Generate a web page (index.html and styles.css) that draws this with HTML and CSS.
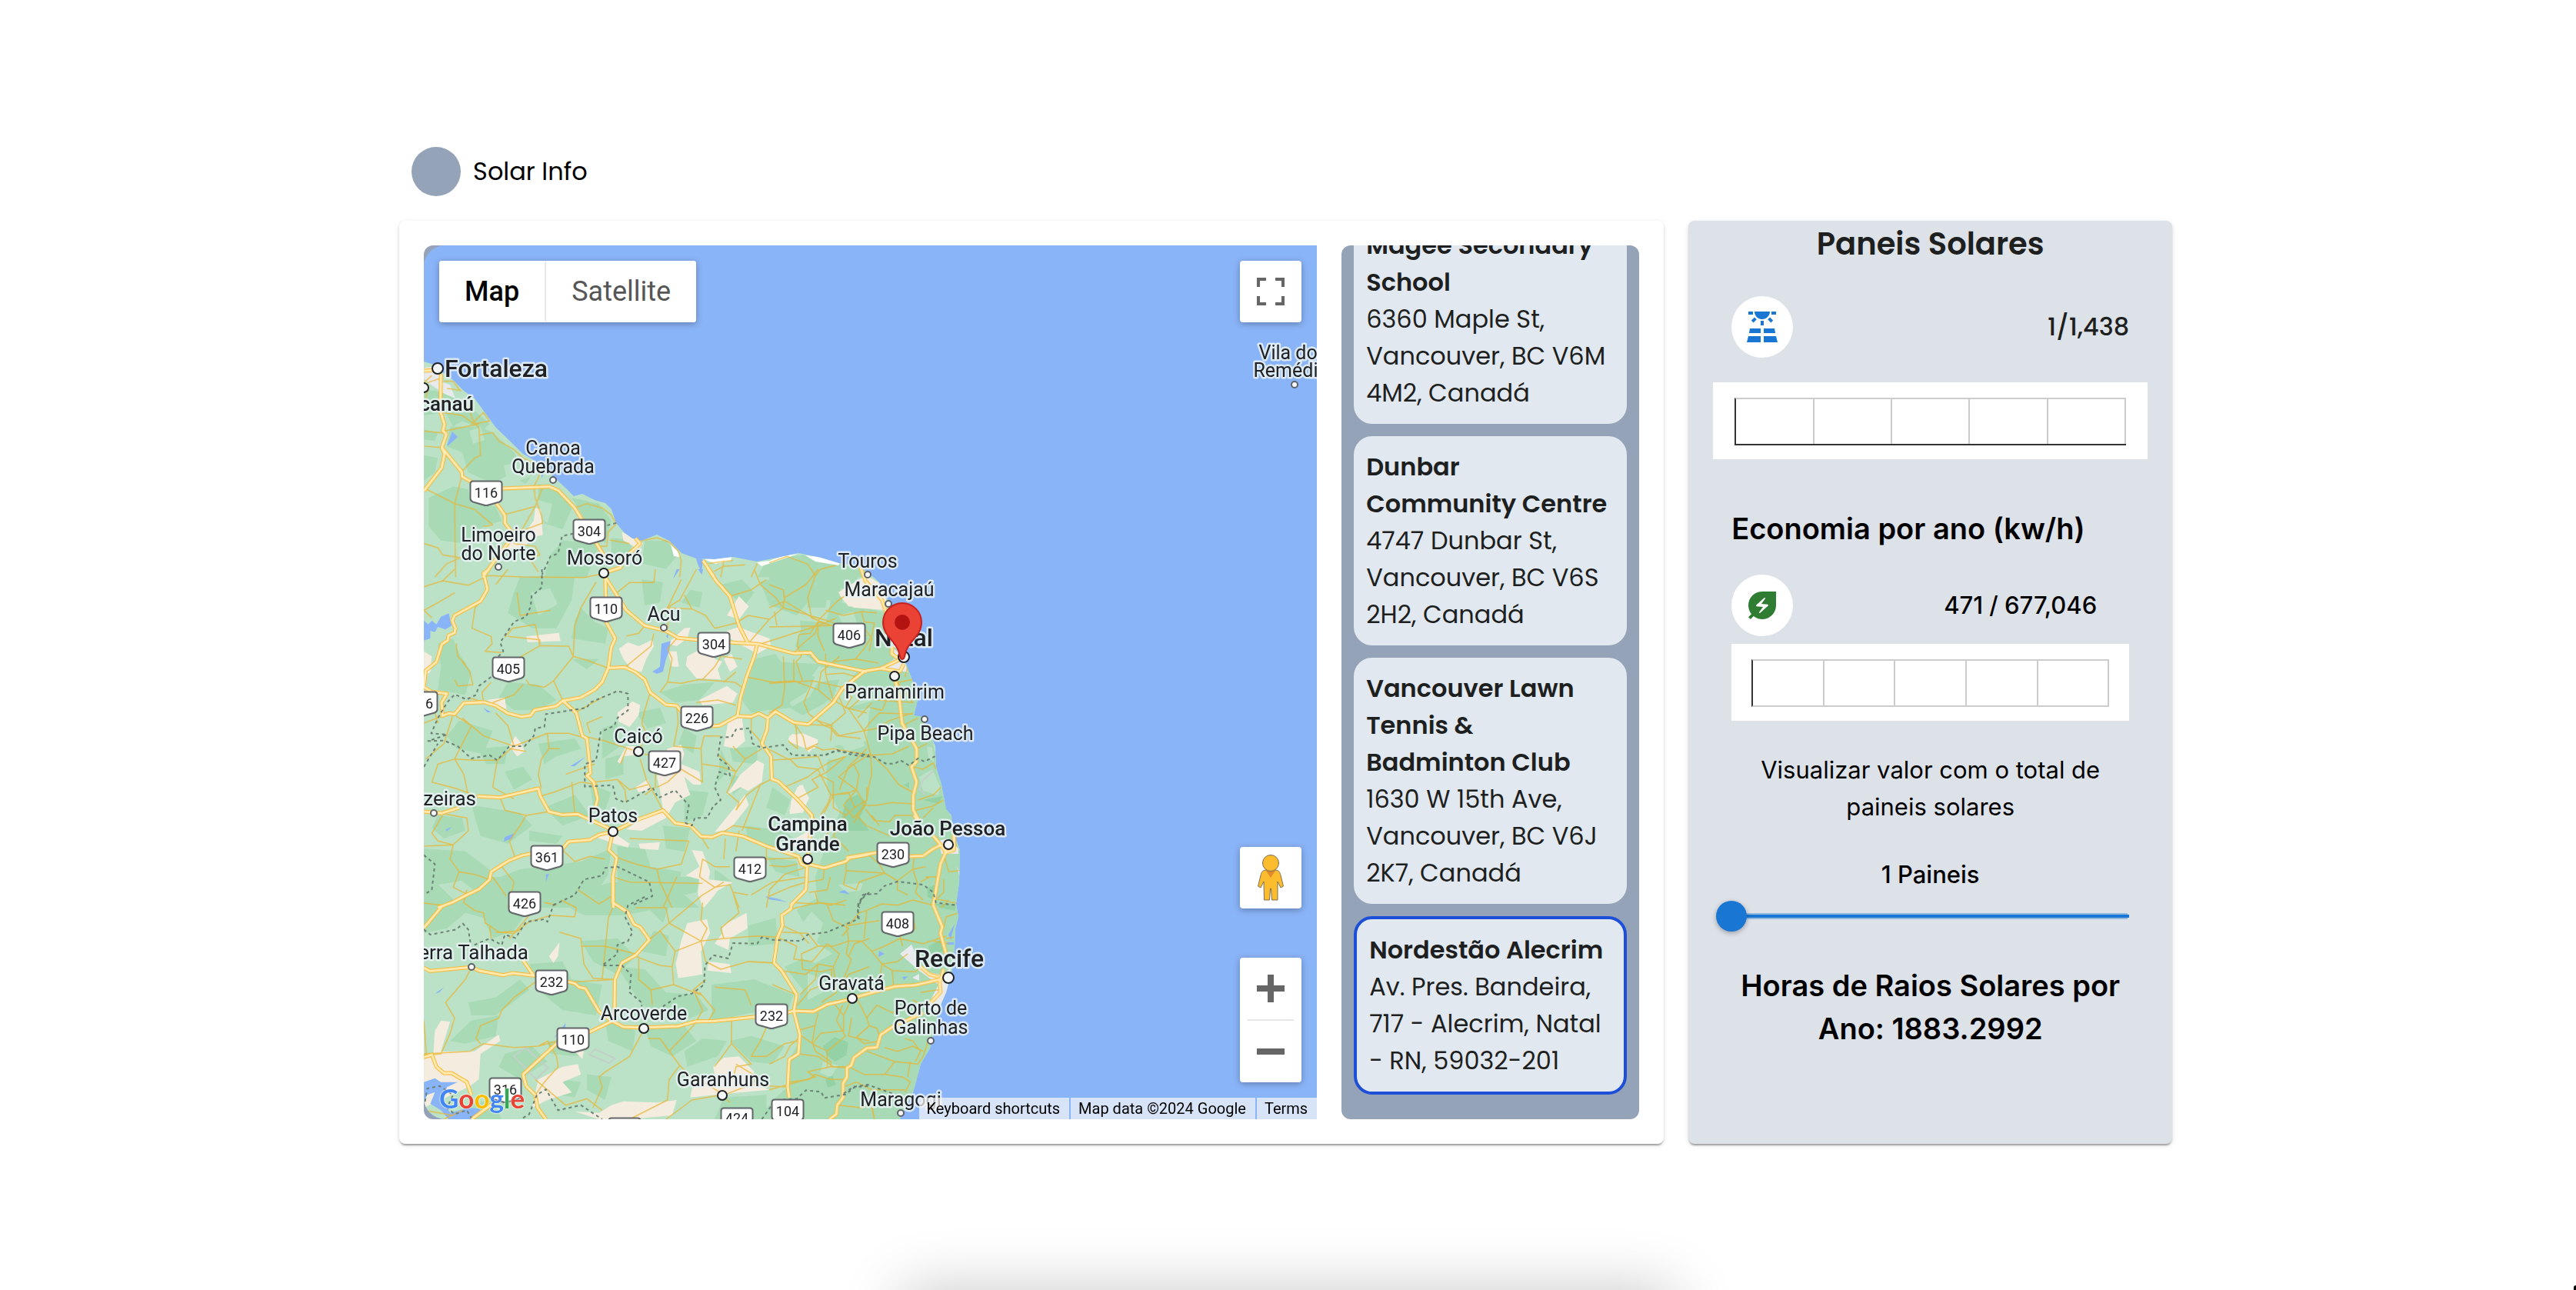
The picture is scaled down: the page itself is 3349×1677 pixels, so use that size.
FILE: index.html
```html
<!DOCTYPE html>
<html lang="pt-BR">
<head>
<meta charset="utf-8">
<meta name="viewport" content="width=device-width, initial-scale=1">
<title>Solar Info</title>
<link rel="stylesheet" href="styles.css">
</head>
<body>
<div class="page">
  <header class="brand">
    <span class="brand-mark"></span>
    <span class="brand-name">Solar Info</span>
  </header>

  <main class="dashboard">
    <section class="card explorer">
      <div class="map-frame">
        <div class="map">
          <svg class="map-canvas" viewBox="551 319 1161 1136" preserveAspectRatio="xMinYMin slice" role="img" aria-label="Mapa do Nordeste do Brasil">
            <defs>
              <path id="coast" d="M551 470L561 473 589 494 603 508 617 518 644 555 680 590 692 597 704 605 723 623 735 634 746 645 757 642 773 650 787 654 795 662 801 680 812 693 822 700 834 703 854 695 870 703 886 719 905 726 929 727 953 724 984 730 1020 723 1038 719 1067 725 1090 732 1113 735 1127 743 1143 757 1153 777 1160 800 1170 830 1177 860 1187 887 1193 910 1188 930 1200 932 1204 947 1213 963 1216 970 1217 997 1224 1020 1230 1052 1237 1060 1238 1080 1245 1097 1248 1105 1247 1147 1243 1175 1246 1192 1242 1207 1241 1233 1238 1260 1230 1290 1220 1313 1212 1350 1209 1363 1197 1383 1187 1420 1170 1455H551Z"/>
              <clipPath id="land-clip"><use href="#coast"/></clipPath>
              <g id="shield">
                <path d="M-17-15.500H17Q20.500-15.500 20.500-12V7Q20.500 10 17 11.500L3 15.500Q0 16.500-3 15.500L-17 11.500Q-20.500 10-20.500 7V-12Q-20.500-15.500-17-15.500Z"/>
              </g>
              <g id="highways">
                <g transform="matrix(.3954 0 0 .37 510 170)">
                  <path d="M104 843L149 840M160 855L158 985 172 1032 166 1053 178 1066 163 1113 172 1135 162 1185 104 1265M163 1113L228 1198 230 1215 270 1240M340 1305L370 1350V1378L400 1420 340 1505 298 1568M360 1257L515 1250 545 1263 600 1325 660 1430 700 1500M695 1553L750 1535 760 1505 815 1450 800 1432M1022 1510L1058 1568"/>
                </g>
                <g transform="matrix(.3954 0 0 .3333 510 740)">
                  <path d="M318 0L300 15 313 78 290 125 205 180 197 200 208 230 205 248 185 258 182 278 163 292 145 362 110 395 104 460 130 478 180 485 162 520 165 572 185 562 205 565 235 522 300 518 340 532 380 562 425 575 455 570 467 550 540 533 560 513 620 500 665 470 690 440 710 385 720 305 733 270 705 210 700 20"/>
                  <path d="M700 30L770 160 830 220 900 240 940 268 1005 275M1108 285L1205 292 1320 328 1375 325 1400 360 1560 400M710 385L765 382 800 402 830 430 848 480 900 528 935 532 955 560M1050 612L1075 610 1135 572 1145 500 1165 420 1190 340 1200 292M1040 0L1065 45 1110 105 1140 220 1170 290"/>
                  <path d="M1135 572L1180 575 1205 562 1235 580 1260 555 1320 598 1368 605 1450 520 1480 465 1550 400M1235 580L1232 625 1215 680 1245 730 1248 818 1270 828 1330 895 1380 960 1366 1131M560 513L605 560 625 650 640 660 652 795 640 805 662 830 675 895 665 940"/>
                  <path d="M104 945L160 952 220 930M280 885L355 890 480 855 487 885 515 945 560 958 610 955 720 1015M726 1023L680 1035 650 1055 580 1062 560 1090M455 1110L430 1115 385 1135 325 1180 320 1210 285 1248 245 1270 200 1298 150 1320M726 1023L810 975 890 940 930 990 980 1000 1015 1042 1050 1045 1085 1028 1150 1040 1230 1080 1335 1120 1345 1150 1366 1160M722 1040L712 1095 738 1125 725 1200 727 1320M1366 1150L1420 1165 1490 1140 1505 1125 1568 1112M1364 1160L1360 1250 1310 1310"/>
                </g>
                <g transform="matrix(.3954 0 0 .3333 510 1140)">
                  <path d="M165 112L104 198M727 0L725 100 775 138 795 185 815 195 845 245 800 305 755 335 732 400 730 555M104 355L125 367 260 352 285 365 365 383 395 375 465 385 430 325M575 408L600 415 615 430 635 435 680 525 720 560 760 585 826 587 940 582 1000 563 1060 562 1195 545M1298 530L1320 522 1385 525 1430 497 1512 475M727 560L645 607M540 650L430 770 440 815 470 850 478 900 505 945M104 703L130 693 145 740 170 765 195 765 245 800 260 850M330 885L260 945M1315 100L1310 125 1280 150 1283 190 1267 235 1255 335 1280 365 1330 460 1320 522 1340 615 1335 690 1305 712 1300 820 1305 860"/>
                </g>
                <g transform="matrix(.3333 0 0 .3333 1000 680)">
                  <path d="M365 578L435 567 525 525M435 567L510 578 525 550M490 600L508 690 518 780 575 880V930L555 950 575 1010 562 1060V1120L585 1160M355 170L375 225 440 300 460 360M480 480L478 510 500 525"/>
                </g>
                <g transform="matrix(.3333 0 0 .3333 1000 1060)">
                  <path d="M300 165L420 145M545 160L600 158 640 130 670 115 690 145 720 135V60M640 80L690 140 668 190 640 350 675 435 668 460 690 540M324 713L460 675 490 667 570 662 665 640M680 600L665 650 668 690 630 730M590 590L625 620 660 630M600 770L480 825 435 855 420 905 380 908 330 945 320 975 303 985V1020L288 1045V1100L265 1130 262 1165 235 1185M565 0L580 20"/>
                </g>
              </g>
            </defs>

            <rect class="sea" x="551" y="319" width="1161" height="1136"/>
            <use href="#coast" class="land"/>

            <g clip-path="url(#land-clip)">
              <g class="forest">
                <g transform="matrix(.3954 0 0 .37 510 170)">
                  <path d="M104 910L150 915 190 930 250 965 320 1030 300 1050 230 1020 200 1040 175 990 104 1000ZM190 1040L290 1040 330 1060 400 1130 420 1170 470 1190 440 1240 380 1210 330 1240 250 1200 230 1130 180 1110ZM104 1050L150 1060 140 1090 104 1085ZM104 1140L150 1150 140 1200 104 1230ZM120 1290L200 1250 250 1260 260 1310 340 1320 360 1370 300 1390 240 1450 160 1440 120 1390ZM480 1240L560 1270 590 1330 560 1400 500 1380 480 1300ZM590 1290L680 1310 720 1370 700 1450 640 1380ZM560 1440L680 1450 640 1568 500 1568 520 1490ZM720 1430L790 1440 780 1500 720 1490ZM830 1440L900 1440 940 1490 900 1540 820 1520ZM1230 1510L1350 1490 1450 1520 1568 1540V1568H1200Z"/>
                </g>
                <g transform="matrix(.3954 0 0 .3333 510 740)">
                  <path d="M420 30L600 20 590 120 540 230 460 230 380 170 400 90ZM150 290L200 270 220 330 260 400 240 490 150 470 160 380ZM620 150L660 200 710 230 700 290 590 270 600 200ZM820 40L890 50 880 130 830 140ZM980 80L1020 90 1010 150 950 130ZM1080 60L1150 40 1190 90 1160 140 1110 100ZM1210 50L1300 20 1400 60 1470 50 1480 130 1380 110 1330 180 1240 140ZM1340 200L1440 210 1540 300 1560 380 1440 340 1350 290ZM1190 350L1260 330 1300 400 1390 420 1360 480 1280 540 1180 560 1150 510ZM1400 440L1470 430 1450 500 1390 540 1370 500ZM380 440L480 450 540 510 480 550 400 550 350 500ZM590 350L680 350 640 390ZM880 480L960 450 1060 440 1010 510 930 520ZM800 560L880 540 900 600 840 620ZM220 590L330 630 300 720 210 700 180 650ZM280 700L380 690 370 760 310 760ZM370 790L430 770 460 820 400 860ZM480 680L600 660 620 700 540 730 500 760ZM690 620L740 600 750 690 690 740ZM960 620L1000 650 990 720 940 680ZM700 740L760 720 760 800 700 820ZM960 860L1040 870 1020 960 960 990ZM1110 700L1200 690 1200 760 1120 750ZM1110 800L1180 820 1120 880ZM260 920L420 950 460 1000 380 1070 290 1040ZM500 930L600 880 650 960 560 1000ZM450 1020L560 1040 540 1070 450 1060ZM150 960L230 970 240 1020 170 1050 130 1010ZM104 1090L240 1100 330 1180 310 1240 200 1320H104ZM250 1250L420 1170 620 1140 720 1090 710 1190 640 1320H250ZM740 1080L830 1090 850 1160 950 1180 940 1250 1010 1320H740ZM890 1000L980 1010 960 1100 900 1090ZM1160 1000L1290 1020 1340 1070 1280 1090 1170 1060ZM1060 1170L1120 1220 1060 1230ZM1250 850L1310 900 1290 960 1230 930ZM1430 750L1568 700V1320H1400L1390 1200 1420 1100 1480 960 1430 860ZM1230 1120L1330 1140 1340 1200 1260 1180ZM1080 700L1110 780 1070 830ZM650 840L720 870 700 940 660 920Z"/>
                </g>
                <g transform="matrix(.3954 0 0 .3333 510 1140)">
                  <path d="M104 0H560L520 90 440 140 400 210 330 240 300 160 240 140 180 200 104 220ZM560 100L620 60 720 20 840 30 850 130 760 150 620 150ZM840 0H1010L1000 60 920 80 890 180 840 120ZM860 210L910 230 900 310 820 290ZM620 250L740 240 800 310 740 380 660 330ZM450 340L560 330 590 400 690 420 670 540 560 520 480 440ZM250 490L340 470 420 400 450 440 340 540 260 540ZM190 640L260 560 350 540 340 620 240 650ZM370 690L460 660 510 720 420 790 350 740ZM510 640L630 650 610 700 520 690ZM700 560L800 600 790 680 710 640ZM830 590L960 580 1000 640 920 700 850 660ZM1020 630L1100 640 1070 700 970 740 960 680ZM640 770L720 780 700 870 640 830ZM740 350L830 360 900 450 1000 460 1040 520 960 560 820 500ZM1050 420L1190 400 1320 460 1300 520 1180 530 1050 560ZM1170 190L1260 160 1270 260 1170 270ZM1330 130L1400 80 1568 0V945H1200L1260 860 1300 820 1310 700 1350 620 1320 520 1350 440 1290 350 1400 290ZM1110 640L1180 620 1290 660 1250 730 1180 720ZM1090 860L1230 850 1230 945H1060ZM240 890L330 870 360 945H250ZM560 790L620 800 600 860 540 850Z"/>
                </g>
                <g transform="matrix(.3333 0 0 .3333 1000 680)">
                  <path d="M0 160L180 160 340 180 350 260 230 250 220 330 150 330 150 240 0 220ZM240 300L460 350 520 520 560 600 600 720 640 860 660 950 720 1200H250L300 1050 250 950 330 900 250 870 380 850 390 740 300 720 420 690 300 640 340 580 200 560 100 480 130 400 220 400ZM0 540L200 550 150 620 0 600ZM0 640L60 660 90 720 0 730ZM80 720L190 660 220 700 130 750ZM230 920L330 940 300 1060 220 980Z"/>
                </g>
                <path d="M1140 1060H1260V1455H1050V1200L1100 1120Z"/>
              </g>
              <g class="meadow">
                <path d="M1090 1150L1122 1148 1118 1158 1100 1160ZM1035 1210L1055 1185 1070 1200 1062 1225 1082 1240 1060 1252 1040 1245ZM1050 1265L1062 1270 1070 1290 1050 1300ZM1195 1010L1212 1000 1222 1022 1220 1034 1200 1028ZM1085 955L1120 950 1124 970 1100 978ZM1205 970L1212 972 1214 990 1207 985ZM1106 925L1132 920 1125 940ZM610 560L625 555 630 572 615 577ZM655 605L680 600 690 620 660 630ZM700 650L718 655 712 680 698 670Z"/>
                <path d="M690 770L715 765 725 785 700 800ZM570 1150L600 1145 620 1160 590 1170ZM700 1185L740 1180 760 1190 720 1205ZM1090 800L1110 795 1115 815 1100 820ZM1070 1380L1090 1385 1080 1400 1066 1395Z"/>
              </g>
              <g class="woods">
                <path d="M1100 1040L1115 1033 1127 1044 1118 1062 1130 1080H1090ZM1070 1360L1085 1348 1103 1355 1100 1372 1086 1380 1075 1372ZM1073 1403L1082 1398 1087 1410 1076 1414ZM1205 1155L1215 1150V1170L1206 1166ZM1215 1175H1242V1184L1222 1180ZM1207 1230L1222 1222 1230 1236 1210 1240ZM1200 1040L1226 1035 1220 1045ZM1175 1020L1182 1017V1025Z"/>
              </g>
              <g class="sand">
                <g transform="matrix(.3954 0 0 .37 510 170)">
                  <path d="M470 1325L488 1330 495 1420 470 1425 430 1465 380 1470 370 1440 430 1420 465 1370ZM755 1410L800 1430 825 1450 810 1470 760 1440Z"/>
                </g>
                <g transform="matrix(.3954 0 0 .3333 510 740)">
                  <path d="M440 262L548 248 553 280 445 285ZM745 310L775 285 810 300 855 275 860 300 835 350 820 400 790 395 760 350ZM905 290L960 230 980 228 970 270 935 300ZM905 320L935 320 942 380 920 380ZM1000 320L1030 270 1050 300 1060 350 1085 360 1070 390 1080 430 1000 425 965 375 970 340ZM1100 240L1140 225 1170 240 1240 270 1245 300 1200 330 1110 270ZM1090 350L1115 330 1135 380 1110 400ZM1100 180L1140 105 1172 145 1140 195ZM1010 510L1100 455 1135 485 1120 520 1020 530ZM1105 590L1150 580 1160 670 1130 700 1090 690ZM1305 650L1350 640 1400 665 1390 700 1350 695 1310 675ZM740 560L790 515 815 530 810 570 780 615 745 595ZM310 510L370 500 375 545ZM385 690L405 650 425 680 435 710 410 730ZM104 320L130 340 125 400 104 420ZM740 750L770 690 820 690 830 720 760 730 750 760ZM905 700L950 685 960 720 950 760 1010 790 1015 840 990 840 960 810 970 850 980 880 930 910 900 970 820 1020 770 1015 830 960 890 940 880 860 870 810ZM800 850L840 820 850 860 810 870ZM1145 800L1200 745 1222 760 1215 830 1170 865 1145 850 1100 880ZM1060 1025L1160 880 1172 920 1110 1015ZM1305 945L1340 840 1370 890 1350 950ZM660 1040L730 1030 780 1070 775 1085 730 1070ZM810 1070L880 1065 875 1095 815 1090ZM985 1095L1020 1100 1045 1180 1040 1210 1120 1220 1060 1260 1020 1320 1005 1260 1010 1210 965 1195 1010 1160ZM1310 1060L1370 1020 1380 1100 1340 1100ZM1470 100L1568 80V150L1500 145Z"/>
                </g>
                <g transform="matrix(.3954 0 0 .3333 510 1140)">
                  <path d="M1010 10L1090 20 1060 70 1025 120 1005 70ZM970 180L1035 165 1045 220 1015 290 1020 380 940 395 932 340 950 250ZM1085 190L1165 140 1168 200 1110 240 1105 285 1060 260 1085 220ZM1040 330L1110 340 1115 375 1035 365ZM550 255L545 310 530 335 515 310ZM140 600L160 560 190 565 160 680 270 680 350 615 355 640 290 690 285 790 250 820 104 900V710L135 690ZM480 790L560 740 610 730 620 770 560 800 590 840 510 870 460 900ZM600 915L680 920 720 890 760 875 870 880 935 870 920 930 780 945H680ZM1055 740L1090 705 1140 700 1190 760 1180 800 1240 830 1060 850 980 860 990 800 1060 770ZM600 680L630 680 625 710Z"/>
                </g>
                <g transform="matrix(.3333 0 0 .3333 1000 680)">
                  <path d="M270 270L350 220 380 205 430 235 455 290 460 340 330 330 290 300ZM75 840L90 822 180 840 190 855 155 895 130 865 80 855ZM110 1030L130 1020 155 1075 120 1130 80 1135 85 1085Z"/>
                </g>
              </g>
              <g class="urban">
                <path d="M552 478L575 475 572 496 585 500 592 518 578 512 560 500 551 492ZM1150 865L1170 852 1177 862 1180 874 1170 872 1160 874ZM1160 842L1168 848 1166 858ZM1220 1093L1232 1090 1246 1103V1110H1224ZM1243 1125L1247 1133 1248 1140ZM1170 1240L1185 1228 1200 1262 1225 1268 1236 1258 1234 1285 1222 1315 1205 1310 1220 1280 1195 1262ZM1186 1271L1195 1266 1195 1275Z"/>
              </g>
              <g class="lake">
                <g transform="matrix(.3954 0 0 .3333 510 740)">
                  <path d="M104 200L118 215 130 200 145 215 160 185 186 172 195 220 175 235 150 225 140 245 125 240 125 270 104 278ZM885 290L915 280 910 320 900 350 890 400 870 408 855 400 880 380ZM900 262L907 250V270ZM935 0H945L922 40ZM1005 0H1022L1018 22ZM370 1045L400 1030 395 1050 366 1062ZM505 1190L515 1188 505 1222ZM585 768L635 732 600 768ZM300 540L325 558 312 558ZM175 1015L195 1005 180 1022ZM1225 1275L1300 1298 1240 1288Z"/>
                </g>
                <g transform="matrix(.3954 0 0 .3333 510 1140)">
                  <path d="M104 800L140 785 160 800 215 800 180 820 165 870 190 920 250 900 290 905 270 945H185L160 910 125 885 140 840 115 850 104 880ZM140 455L170 430 155 450ZM530 630L570 570 568 590Z"/>
                </g>
                <path d="M581 579L588 561 595 568 583 579ZM704 622V606L706 618ZM903 717L906 730 912 745 914 728ZM1142 1244L1143 1236 1150 1240ZM1173 1270L1181 1269 1175 1274ZM1233 1215L1241 1201 1236 1222ZM1231 1225H1240V1228H1231ZM1090 1160L1098 1157 1105 1163 1097 1161ZM1000 1166L1026 1173 1010 1168Z"/>
              </g>
              <g class="surf">
                <path d="M915 727L932 725 951 724 950 729 930 733ZM984 731L1000 729 1020 722 1037 720 1020 726 990 736ZM1047 722L1067 724 1092 731 1090 735 1060 730ZM872 708L882 718 884 724 876 723Z"/>
              </g>
              <g class="park-line">
                <path d="M1214 1002L1200 1014 1195 1026 1203 1033M668 1373L683 1362 712 1388 697 1403ZM766 1371L774 1364 800 1376 792 1382Z"/>
              </g>

              <g class="minor">
                <g transform="matrix(.3954 0 0 .37 510 170)">
                  <path d="M104 885L130 860M115 885L158 870M170 880L200 880 225 915M180 905L220 912M165 990L230 1000 270 1030 320 1020 300 990 260 1030M250 960L262 1010 285 1045 290 1140 270 1150 228 1198M172 1055L285 1030M104 1055L165 1062M104 1108L163 1113M285 1070L330 1060 350 1090 400 1120 430 1150 490 1180 480 1220 465 1250 470 1290 490 1350 495 1378 440 1400 380 1405M104 1255L205 1310 208 1568M228 1215L205 1310 270 1330 330 1385 300 1390M470 1320L370 1348M495 1250L470 1320 400 1450M600 1325L640 1310 690 1325 720 1350 736 1380 710 1410 705 1460 680 1460M715 1438L780 1450M820 1440L870 1430 910 1445 940 1475 950 1510 945 1568M104 1450L150 1465 165 1490 225 1500 180 1520 140 1568M400 1450L470 1460 485 1490 450 1500 480 1550M700 1500L760 1520M1090 1510L1080 1568M1058 1548L1090 1530 1160 1525M1200 1520L1180 1568M1040 1520L1120 1510M120 895L110 940"/>
                </g>
                <g transform="matrix(.3954 0 0 .3333 510 740)">
                  <path d="M104 68L165 45 205 0M165 45L250 62 315 25 430 30 630 32 680 20M205 92L150 130 104 160M290 125L272 150 262 230 325 262 328 290 305 320 360 325M670 50L620 150 600 220 595 340 530 435 500 460 450 450 440 430M410 90L420 180M420 180L520 160M340 60L380 0M380 262L485 275 485 298M370 265L395 230 470 215 485 298 410 350M485 298L580 300 595 340 640 355 708 385M530 435L560 510M230 360L255 400 265 450 215 455 205 430M300 518L295 480 325 440M210 290L215 340 240 370M104 160L130 190"/>
                  <path d="M740 90L780 52 860 52 865 0M950 40L905 150 880 190M1000 0L945 120 910 145 905 230M905 150L985 155 1030 180 1060 230 1130 210M985 155L960 100M1130 210L1170 180 1240 195 1285 150 1260 110 1210 60 1190 0M1240 195L1170 290M1285 150L1430 200 1560 260M1285 150L1290 110 1360 60 1400 0M1110 105L1180 80 1230 40M1400 220L1390 250 1340 300 1320 328M1460 190L1400 220 1320 250 1210 292M830 220L810 250 770 260M860 250L850 300 765 382M935 270L905 310 920 350 905 440 880 480M905 440L950 445 1010 430 1125 440 1150 460M1040 300L1080 340 1060 380 1020 430M1085 340L1150 350"/>
                  <path d="M848 480L830 550 820 600 835 640 815 700M935 532L940 600 925 690 1015 700 1025 650 1080 650M1015 700L1020 830 950 780 905 830 870 850M1000 520L1070 510 1130 530M1165 420L1250 440 1320 435 1400 470 1450 520M1320 435L1320 350M1400 470L1410 400 1470 340M1180 575L1180 630 1210 670M1368 605L1440 610 1490 560 1470 500M1440 610L1470 650 1540 660M1320 598L1350 650 1360 700 1400 680M1215 700L1160 740 1130 790 1080 770 1020 760M1160 740L1120 690M1070 720L1130 790 1100 870 1140 910 1130 940M1130 940L1165 880 1210 840M1248 818L1210 840 1150 1020"/>
                  <path d="M625 650L700 670 790 705M640 660L580 640 510 640 400 690M510 640L515 700 550 700M515 700L490 740 480 800 490 855M400 690L345 745 330 850M400 690L300 650 230 580M200 565L260 610 205 740M205 740L235 800 250 885M205 740L150 760 130 830M130 830L210 855 280 885M205 740L270 745 345 745M340 560L380 610 400 690M385 700L440 710M110 740L170 680 200 565M675 840L620 830 530 870 487 885M590 830L600 955M665 760L640 770 570 800M740 820L765 860 770 910M662 830L740 820 780 860 840 840M815 740L835 820 890 940M830 720L860 730M770 700L750 760M865 780L865 850 830 880M690 575L640 600 650 640"/>
                  <path d="M104 1080L200 1075 250 1020 245 970 160 952M200 1075L190 1130 220 1180 270 1190 320 1210M165 960L130 1030 150 1060 200 1075M420 1000L385 1060 405 1130M420 1000L440 960 515 945M220 1180L200 1240 250 1270M360 1160L400 1220 380 1320M560 1095L600 1140 650 1120 700 1130M740 1125L800 1150 870 1170 950 1150 975 1060 780 1050M870 1170L880 1220 920 1320M725 1200L780 1220 1020 1225M1015 1042L1040 1090M1085 1028L1120 1000 1210 1015M1095 1050L1090 1130M1140 1020L1130 1100M1020 1130L1010 1200 1060 1240 1110 1230 1140 1320M1020 1130L1060 1160 1110 1160M1230 1080L1230 1150M1230 1130L1360 1125M1366 1160L1290 1190 1240 1250 1230 1320M1380 960L1420 1010 1450 1000 1400 1080M1450 880L1500 870 1520 930 1490 960 1450 930ZM1520 930L1560 900 1560 850M1490 960L1450 1040 1500 1100M1400 800L1450 830 1450 880 1420 950M1330 895L1400 850 1380 820 1430 790 1490 730"/>
                  <path d="M1480 465L1510 500 1490 540 1560 560M1235 700L1300 740 1400 730 1420 790M1560 700L1500 770 1470 860M104 600L165 572M130 520L150 600M250 500L300 518M430 450L400 490 330 520M600 560L690 500M330 850L400 895M355 890L370 940 440 960M1090 440L1130 400"/>
                </g>
                <g transform="matrix(.3954 0 0 .3333 510 1140)">
                  <path d="M104 102L165 110M245 50L235 100 270 130 300 140 305 180 320 190 325 240M375 75L330 0M450 150L400 220 340 215M320 190L350 215 420 210M500 100L540 110M555 90L605 120 600 155 520 150 450 175 400 220 385 240M610 50L680 105 720 75M725 120L710 160 690 400M550 215L620 240 630 340 660 395 730 400M620 270L700 270 800 300M845 245L880 210 930 290 1015 250 1090 240M880 210L910 180 900 120 800 120M910 180L1020 70 1090 20M910 180L1015 250 1030 330M935 0L890 120M930 290L920 350 880 345 800 310M920 350L925 420 850 440 810 400 810 310M850 440L855 500M925 420L1015 460 990 440 1030 400M1015 250L1035 200 1015 170 1020 100M1030 330L1080 360 1170 330 1255 335M1080 200L1090 240 1200 230 1267 235M1080 200L1140 140 1120 60 1170 70"/>
                  <path d="M470 410L400 470 360 520 350 550 290 580 275 630 290 650M260 352L240 400 175 490 205 550 190 610 160 690 104 695M104 560L112 690M104 690L255 680 300 650 400 665 480 660 540 640M480 660L510 640 540 700 545 740 500 800 470 850M580 410L730 400M820 610L780 700 700 760 680 780 690 820 660 900M840 630L880 630 945 735 910 790 905 870 780 945M470 790L570 890 640 865 690 910M910 680L990 580 1000 563M945 735L1000 800M1115 545L1115 650 1060 740M1115 650L1180 730 1130 740 1120 790M1180 700L1230 700 1290 650 1330 640M1180 700L1210 640 1240 560M1040 560L1060 520 1010 450M1000 563L1020 520 990 440M1010 790L1090 850 1180 810 1300 820M1180 810L1200 780 1130 730M985 870L1084 850 1110 880M900 945L985 870M104 910L200 930M170 945L230 910"/>
                  <path d="M1180 70L1250 20 1360 0M1283 190L1340 220 1370 260M1310 125L1400 100 1490 110M1370 60L1430 50 1440 0M1430 110L1450 170 1500 200 1480 230M1267 235L1330 270 1320 320 1380 330 1430 260M1255 335L1170 330M1280 365L1360 380 1400 340 1450 350 1470 300 1430 260M1400 340L1390 400 1340 460M1450 350L1460 450 1410 490M1568 350L1500 380 1470 440M1330 600L1390 580 1400 530M1390 580L1380 650 1430 680 1490 620 1460 560 1480 500M1335 690L1400 700 1450 740 1495 740M1430 680L1430 740M1305 800L1370 790 1390 770 1440 790 1497 790M1510 550L1500 620 1568 640M1568 240L1520 260 1500 310M1180 500L1160 440 1060 430M1330 460L1250 420"/>
                </g>
                <g transform="matrix(.3333 0 0 .3333 1000 680)">
                  <path d="M0 155L70 130 150 160 180 205 150 290 165 370 190 380M180 205L200 180 260 165M0 240L55 260 60 305 0 330M60 305L190 380 245 400 0 405M20 345L30 400M190 380L270 300 350 250M220 340L290 360 360 345 420 350M360 345L370 385 410 390 400 440M245 400L190 385 190 440 215 500M400 440L370 490 335 530 250 540M375 415L400 450 390 500M115 435L160 430 190 385M115 435L110 480 125 520 105 540 130 615M55 520L60 640 50 710 0 740M0 625L170 615 330 650M170 615L135 700 155 745 215 790M220 510L220 590 250 690 310 725 350 690 330 640M335 530L425 545M220 590L290 585 340 600M105 800L110 880 75 850M95 770L105 800M155 745L190 770 245 790 240 850M215 790L240 800 265 830 370 810 390 780 430 740 560 745M310 725L370 810 395 900M370 810L420 800 470 770 560 740M395 720L440 730 480 640M420 690L560 700 500 620M345 760L400 700"/>
                  <path d="M395 900L400 980 390 1020 380 1080 330 1170M395 900L330 940 270 990 340 1040 375 1100 330 1150 290 1100 340 1040M330 940L350 980 340 1040M395 900L460 960 505 1020 560 1050M145 885L175 870 210 885 250 880 395 905 480 900 545 870M190 960L110 950 80 920 0 925M190 960L240 930 300 910M190 960L240 1060 230 1090 200 1140M240 1060L300 1055 340 1040M365 1100L420 1100 480 1090 562 1095M375 1115L410 1160 470 1165 490 1140 560 1140M60 1030L150 990 190 960M520 790L580 760M560 950L600 960 640 935 650 960M570 1120L635 1105 680 1080M600 1150L640 1110M505 620L560 610 570 650M575 880L615 860M580 1080L640 1060 670 1030M540 560L530 600"/>
                </g>
                <g transform="matrix(.3333 0 0 .3333 1000 1060)">
                  <path d="M0 195L60 200 110 190M215 200L210 250 150 260M0 315L80 280 145 260M300 180L300 215 450 225 430 190 390 155M300 215L290 270 340 290 350 260 450 225 500 255 500 290 540 310M500 255L560 210 610 200M565 160L560 210 580 270 570 300 600 330M340 0L380 40 470 80M400 0L430 40M610 240L660 240M680 150L700 220 740 215M680 250L680 300 650 330M650 325L740 345M590 260L625 240M180 300L190 340 240 350 300 330M90 340L190 345M380 370L440 345 500 350M380 370L350 380 310 430 365 420 430 410M380 370L370 480M50 455L150 460 190 510 250 510 310 490 300 420M190 510L125 540 130 600 200 610 245 600 240 640M310 490L360 490 400 530 440 580 430 640M310 490L300 540 320 560 310 590 280 660 320 680M400 530L450 510 510 480 600 500 690 470M510 470L520 510M440 580L500 570 540 540M480 605L485 670M480 605L570 610 590 590M440 580L480 605M560 400L570 440 550 460M690 480L720 475M690 395L740 380M670 360L700 330"/>
                  <path d="M110 740L160 680 240 650M125 860L170 890 200 850 290 840 290 780 320 715M290 780L250 730 210 740M170 890L180 920 240 960 240 980 320 985M240 980L150 1000 180 1020 0 1070M340 865L390 820 380 790 420 740 480 770 530 740M340 865L370 890 430 880M345 720L380 790M390 820L420 830 430 860M450 905L500 920 560 900 600 920M380 920L490 960 580 970M490 960L450 1010 520 1020 550 1040 530 1080M320 985L370 1010 450 1010M550 960L540 1020M530 870L560 880 590 920 570 960M288 1060L340 1040 400 1070 530 1070M270 1130L360 1140 400 1125 410 1185M590 690L660 680M560 720L600 740M620 880L600 940 580 970M0 970L60 940 80 900 125 860M400 1140L410 1185M500 350L560 330 640 350M700 500L640 490M690 395L680 440"/>
                </g>
              </g>
            </g>

            <use href="#highways" class="highway-casing"/>
            <use href="#highways" class="highway-core"/>

            <g class="border">
              <g transform="matrix(.3954 0 0 .37 510 170)">
                <path d="M736 1378L700 1388M595 1415L558 1424 545 1485 520 1495 492 1560"/>
              </g>
              <g transform="matrix(.3954 0 0 .3333 510 740)">
                <path d="M492 0L492 70 458 105 455 145 440 185 400 205 355 285 365 320 345 345M325 420L285 455 275 490 245 508 205 488 180 520 150 580 128 640 180 645 118 670 170 668 215 690 260 738 320 725 345 745 385 690 435 690 465 650 470 620 500 615 505 565 640 540 650 520 740 475 775 485 775 550 740 580 730 610 685 635 670 745 633 760 633 848 725 842 735 895 765 910 855 850 875 892 930 862 975 920 965 990 985 1000 995 970 1035 970 1055 925 1080 900 1060 850 1075 790 1110 805 1105 765 1070 735 1080 655 1115 655 1130 625 1175 620 1185 680 1215 697 1285 685 1315 725 1420 725 1460 708 1568 725M104 770L150 680M104 1115L140 1150 130 1250 110 1265M530 1310L600 1270 630 1210 690 1195 700 1165 740 1160 845 1220 855 1275 790 1310M1568 1260L1540 1290 1535 1320"/>
              </g>
              <g transform="matrix(.3954 0 0 .3333 510 1140)">
                <path d="M104 205L125 225 210 205 232 182 250 205 258 265M270 265L320 240 360 265 370 225 405 238 440 175 500 165 510 175 530 110 540 100M830 78L775 110 765 155 790 215 775 250 740 265 740 300 690 345 755 345 785 380 780 450 820 490 820 505M890 505L940 465 985 455 1025 420 1028 345 1055 305 1105 318 1120 258 1200 260 1215 235 1250 245 1345 250 1365 225 1430 215 1530 165 1532 100 1560 62M104 900L115 825 155 815 200 850 180 900 205 925 245 910 260 940M430 940L450 925 475 850 505 828 545 910 620 890 690 945M1215 945L1260 870 1330 865 1360 832 1410 838 1420 862 1490 848 1520 820 1568 815"/>
              </g>
              <g transform="matrix(.3333 0 0 .3333 1000 680)">
                <path d="M220 905L265 885 325 905 410 912 455 938 490 938 512 925 545 945 580 918 605 930 650 908"/>
              </g>
              <g transform="matrix(.3333 0 0 .3333 1000 1060)">
                <path d="M350 405L345 360 365 310 420 305 450 275 500 258 600 270 640 300 650 340 725 350M290 1085L330 1058 385 1050 480 1085"/>
              </g>
            </g>

            <g class="shields">
              <use href="#shield" x="632" y="641"/><use href="#shield" x="766" y="691"/><use href="#shield" x="788" y="792"/><use href="#shield" x="928" y="838"/><use href="#shield" x="1104" y="826"/><use href="#shield" x="661" y="870"/><use href="#shield" x="548" y="915"/><use href="#shield" x="906" y="934"/><use href="#shield" x="864" y="992"/><use href="#shield" x="711" y="1115"/><use href="#shield" x="975" y="1130"/><use href="#shield" x="682" y="1175"/><use href="#shield" x="717" y="1277"/><use href="#shield" x="745" y="1352"/><use href="#shield" x="1003" y="1321"/><use href="#shield" x="657" y="1417"/><use href="#shield" x="1024" y="1445"/><use href="#shield" x="958" y="1456"/><use href="#shield" x="812" y="1469"/><use href="#shield" x="1161" y="1111"/><use href="#shield" x="1167" y="1201"/>
            </g>
            <g class="shield-text">
              <text x="632" y="647">116</text><text x="766" y="697">304</text><text x="788" y="798">110</text><text x="928" y="844">304</text><text x="1104" y="832">406</text><text x="661" y="876">405</text><text x="558" y="921">6</text><text x="906" y="940">226</text><text x="864" y="998">427</text><text x="711" y="1121">361</text><text x="975" y="1136">412</text><text x="682" y="1181">426</text><text x="717" y="1283">232</text><text x="745" y="1358">110</text><text x="1003" y="1327">232</text><text x="657" y="1423">316</text><text x="1024" y="1451">104</text><text x="958" y="1460">424</text><text x="1161" y="1117">230</text><text x="1167" y="1207">408</text>
            </g>

            <g class="town">
              <circle cx="719" cy="624" r="4"/><circle cx="648" cy="737" r="4"/><circle cx="863" cy="816" r="4"/><circle cx="564" cy="1057" r="4"/><circle cx="1128" cy="747" r="4"/><circle cx="1155" cy="785" r="4"/><circle cx="1202" cy="935" r="4"/><circle cx="1210" cy="1353" r="4"/><circle cx="1171" cy="1447" r="4"/><circle cx="613" cy="1257" r="4"/><circle cx="1683" cy="500" r="4"/>
            </g>
            <g class="city">
              <circle cx="569" cy="479" r="7"/><circle cx="551" cy="504" r="6"/><circle cx="785" cy="745" r="6"/><circle cx="830" cy="977" r="6"/><circle cx="797" cy="1081" r="6"/><circle cx="1050" cy="1117" r="6"/><circle cx="1175" cy="854" r="7"/><circle cx="1163" cy="879" r="6"/><circle cx="1233" cy="1098" r="6"/><circle cx="1233" cy="1271" r="7"/><circle cx="1108" cy="1298" r="6"/><circle cx="837" cy="1337" r="6"/><circle cx="939" cy="1424" r="6"/>
            </g>

            <g class="label label-small">
              <text x="719" y="591">Canoa</text><text x="719" y="615">Quebrada</text>
              <text x="648" y="704">Limoeiro</text><text x="648" y="728">do Norte</text>
              <text x="786" y="734">Mossoró</text><text x="863" y="807">Acu</text>
              <text x="830" y="966">Caicó</text><text x="797" y="1069">Patos</text>
              <text x="619" y="1047" class="to-left label-wide">Cajazeiras</text>
              <text x="1128" y="738">Touros</text><text x="1156" y="775">Maracajaú</text>
              <text x="1163" y="908">Parnamirim</text><text x="1203" y="962">Pipa Beach</text>
              <text x="1107" y="1287">Gravatá</text>
              <text x="1210" y="1319">Porto de</text><text x="1210" y="1344">Galinhas</text>
              <text x="1171" y="1438">Maragogi</text>
              <text x="687" y="1247" class="to-left label-wide">Serra Talhada</text>
              <text x="837" y="1326">Arcoverde</text><text x="940" y="1412">Garanhuns</text>
              <text x="1681" y="467">Vila dos</text><text x="1685" y="490">Remédios</text>
            </g>
            <g class="label label-medium">
              <text x="616" y="534" class="to-left">Maracanaú</text>
              <text x="1050" y="1080">Campina</text><text x="1050" y="1106">Grande</text>
              <text x="1232" y="1086">João Pessoa</text>
            </g>
            <g class="label label-large">
              <text x="645" y="490">Fortaleza</text><text x="1175" y="840">Natal</text><text x="1234" y="1257">Recife</text>
            </g>

            <g class="pin">
              <path d="M1173 857C1170 857 1170 852 1168 846 1163 832 1148 826 1148 809A25 25 0 0 1 1198 809C1198 826 1183 832 1178 846 1176 852 1176 857 1173 857Z"/>
              <circle cx="1173" cy="809" r="10"/>
            </g>
          </svg>

          <div class="map-types">
            <button type="button" class="map-type is-active">Map</button>
            <button type="button" class="map-type">Satellite</button>
          </div>
          <button type="button" class="map-button fullscreen" aria-label="Tela cheia">
            <svg viewBox="0 0 36 36" width="36" height="36"><path d="M0 0H12V4H4V12H0ZM24 0H36V12H32V4H24ZM0 24H4V32H12V36H0ZM32 24H36V36H24V32H32Z"/></svg>
          </button>
          <div class="map-side">
            <button type="button" class="map-button" aria-label="Street View">
              <svg class="pegman" viewBox="-1 -1 36 62" width="36" height="62">
                <path d="M10 20H24C28 21 29 23 30 27L33.500 41 30 43 26 35 26 59H18.500L17.500 44H16.500L15.500 59H8.500L8 35 4 43 .500 41 4 27C5 23 6 21 10 20Z"/>
                <path class="scarf" d="M11 21H23L17 30Z"/>
                <circle cx="17" cy="11" r="10.500"/>
              </svg>
            </button>
            <div class="zoom">
              <button type="button" class="zoom-button" aria-label="Aproximar"><svg viewBox="0 0 36 36" width="36" height="36"><path d="M14 0H22V14H36V22H22V36H14V22H0V14H14Z"/></svg></button>
              <button type="button" class="zoom-button" aria-label="Afastar"><svg viewBox="0 0 36 36" width="36" height="36"><path d="M0 14H36V22H0Z"/></svg></button>
            </div>
          </div>
          <a class="google" href="#" aria-label="Google"><span class="g-blue">G</span><span class="g-red">o</span><span class="g-yellow">o</span><span class="g-blue">g</span><span class="g-green">l</span><span class="g-red">e</span></a>
          <div class="credits">
            <button type="button" class="credit">Keyboard shortcuts</button>
            <span class="credit">Map data ©2024 Google</span>
            <a class="credit" href="#">Terms</a>
          </div>
        </div>
      </div>

      <ul class="places">
        <li class="place"><strong>Magee Secondary School</strong><span>6360 Maple St, Vancouver, BC V6M 4M2, Canadá</span></li>
        <li class="place"><strong>Dunbar Community Centre</strong><span>4747 Dunbar St, Vancouver, BC V6S 2H2, Canadá</span></li>
        <li class="place"><strong>Vancouver Lawn Tennis &amp; Badminton Club</strong><span>1630 W 15th Ave, Vancouver, BC V6J 2K7, Canadá</span></li>
        <li class="place is-selected"><strong>Nordestão Alecrim</strong><span>Av. Pres. Bandeira, 717 - Alecrim, Natal - RN, 59032-201</span></li>
      </ul>
    </section>

    <aside class="card summary">
      <h2 class="summary-title brand-font">Paneis Solares</h2>
      <div class="metric">
        <span class="metric-icon solar">
          <svg viewBox="0 0 24 24" width="48" height="48"><path d="M3 2h3v2H3zM18 2h3v2h-3zM12 7c2.760 0 5-2.240 5-5H7c0 2.760 2.240 5 5 5zM11 8h2v3h-2zM4.900 7.800L7 5.700l1.400 1.400-2.100 2.100zM15.600 7.100L17 5.700l2.100 2.100-1.400 1.400zM3.440 16H11v-3H4zM13 16h7.560L20 13h-7zM21 18h-8v4h9zM2 22h9v-4H3z"/></svg>
        </span>
        <span class="metric-value brand-font">1/1,438</span>
      </div>
      <div class="chart chart-wide"><div class="bars"><i></i><i></i><i></i><i></i><i></i></div></div>

      <h2 class="summary-heading">Economia por ano (kw/h)</h2>
      <div class="metric metric-energy">
        <span class="metric-icon leaf">
          <svg viewBox="0 0 24 24" width="48" height="48"><path d="M12 3c-4.800 0-9 3.860-9 9 0 2.120.740 4.070 1.970 5.610L3 19.590 4.410 21l1.970-1.970C7.930 20.260 9.880 21 12 21c2.300 0 4.610-.880 6.360-2.640C20.120 16.610 21 14.300 21 12V3h-9zm3.830 9.260-5.160 4.630c-.160.150-.410.140-.560-.010-.140-.140-.150-.360-.040-.520l2.440-3.330-4.050-.400c-.440-.040-.630-.590-.300-.890l5.160-4.630c.160-.150.410-.140.560.010.140.140.150.360.040.520l-2.440 3.330 4.050.400c.450.040.630.590.300.890z"/></svg>
        </span>
        <span class="metric-value">471 / 677,046</span>
      </div>
      <div class="chart chart-energy"><div class="bars"><i></i><i></i><i></i><i></i><i></i></div></div>

      <p class="hint">Visualizar valor com o total de paineis solares</p>
      <label class="slider-label" for="panels">1 Paineis</label>
      <input class="slider" id="panels" type="range" min="1" max="1438" value="1">
      <h2 class="summary-total">Horas de Raios Solares por Ano: 1883.2992</h2>
    </aside>
  </main>
</div>
<div class="dock-shadow"></div>
<div class="corner"></div>
</body>
</html>
```
FILE: styles.css
```css
* {
  box-sizing: border-box;
}

body {
  margin: 0;
  background: #fff;
  color: #000;
  font: 32px/48px Inter, "Liberation Sans", sans-serif;
}

h2,
p,
ul {
  margin: 0;
  padding: 0;
}

button {
  border: 0;
  padding: 0;
  background: #fff;
  font: inherit;
  cursor: pointer;
}

.brand-font,
.brand,
.places {
  font-family: Poppins, Inter, sans-serif;
}

.page {
  padding: 191px 15.67% 96px 15.5%;
}

.brand {
  display: flex;
  align-items: center;
  gap: 16px;
  padding: 0 16px 32px;
}

.brand-mark {
  width: 64px;
  height: 64px;
  border-radius: 50%;
  background: #94a3b8;
}

.dashboard {
  display: grid;
  grid-template-columns: 1644fr 629fr;
  gap: 32px;
}

.card {
  border-radius: 8px;
  background: #fff;
  box-shadow: 0 4px 2px -2px rgba(0, 0, 0, .2), 0 2px 2px rgba(0, 0, 0, .14), 0 2px 6px rgba(0, 0, 0, .12);
}

.explorer {
  display: grid;
  grid-template-columns: 3fr 1fr;
  gap: 32px;
  padding: 32px;
}

/* map */

.map-frame {
  border-radius: 12px 0 0 12px;
  background: #94a3b8;
}

.map {
  position: relative;
  height: 100%;
  min-height: 720px;
  overflow: hidden;
  border-radius: 28px 0 0 28px;
  background: #8ab4f8;
  font-family: Roboto, sans-serif;
}

.map-canvas {
  position: absolute;
  inset: 0;
  width: 100%;
  height: 100%;
}

.sea,
.lake {
  fill: #8ab4f8;
}

.land {
  fill: #bbe2c6;
}

.meadow {
  fill: #bbe2c6;
}

.forest {
  fill: #a8dab5;
}

.woods {
  fill: #94d2a5;
}

.sand {
  fill: #f3ecdf;
}

.urban {
  fill: #e8eaed;
}

.surf {
  fill: #fff;
}

.minor,
.border,
.park-line,
.highway-casing,
.highway-core {
  fill: none;
  stroke-linejoin: round;
}

.minor path,
.border path,
#highways path {
  vector-effect: non-scaling-stroke;
}

.minor {
  stroke: #ecb32c;
  stroke-width: 1.5px;
  opacity: .75;
}

.park-line {
  stroke: #c4cfca;
  stroke-width: 2px;
}

.highway-casing {
  stroke: #fbb82e;
  stroke-width: 5px;
}

.highway-core {
  stroke: #ffe9b0;
  stroke-width: 3px;
}

.border {
  stroke: #6b8074;
  stroke-width: 2px;
  stroke-dasharray: 4 4;
}

.shields {
  fill: #fff;
  stroke: #616468;
  stroke-width: 2px;
}

.shield-text {
  fill: #202124;
  font-size: 18px;
  text-anchor: middle;
}

.town {
  fill: #f4f6f7;
  stroke: #5f6368;
  stroke-width: 2px;
}

.city {
  fill: #f4f6f7;
  stroke: #202124;
  stroke-width: 2px;
}

.label {
  fill: #202124;
  stroke: rgba(232, 241, 243, .85);
  stroke-width: 5px;
  stroke-linejoin: round;
  paint-order: stroke;
  text-anchor: middle;
}

.label-small {
  font-size: 25px;
}

.label-medium {
  font-size: 26px;
  font-weight: 500;
}

.label-wide {
  font-size: 26px;
}

.label-large {
  font-size: 32px;
  font-weight: 500;
}

.to-left {
  text-anchor: end;
}

.pin path {
  fill: #ea4335;
  stroke: #c5221f;
  stroke-width: 2px;
}

.pin circle {
  fill: #b31412;
}

.map-types {
  position: absolute;
  top: 20px;
  left: 20px;
  display: flex;
  height: 80px;
  border-radius: 4px;
  background: #fff;
  box-shadow: 0 2px 8px rgba(0, 0, 0, .3);
}

.map-type {
  padding: 0 33px;
  border-radius: 4px;
  color: #565656;
  font-size: 36px;
}

.map-type + .map-type {
  border-left: 2px solid #e8e8e8;
}

.map-type.is-active {
  color: #000;
  font-weight: 500;
}

.map-button,
.zoom {
  width: 80px;
  border-radius: 4px;
  background: #fff;
  box-shadow: 0 2px 8px rgba(0, 0, 0, .3);
  fill: #666;
}

.map-button {
  display: grid;
  place-items: center;
  height: 80px;
}

.fullscreen {
  position: absolute;
  top: 20px;
  right: 20px;
}

.map-side {
  position: absolute;
  right: 20px;
  bottom: 48px;
  display: grid;
  gap: 64px;
}

.pegman {
  fill: #fbbc2e;
  stroke: #7d6f55;
  stroke-width: 1px;
}

.pegman .scarf {
  fill: #e4882c;
  stroke: none;
}

.zoom-button {
  display: grid;
  place-items: center;
  width: 60px;
  height: 80px;
  margin: 0 10px;
}

.zoom-button svg {
  fill: #666;
}

.zoom-button + .zoom-button {
  border-top: 2px solid #e6e6e6;
  height: 82px;
}

.google {
  position: absolute;
  left: 20px;
  bottom: 4px;
  font: 700 35px/48px Lato, sans-serif;
  text-decoration: none;
  text-shadow: 0 0 2px #fff, 0 0 2px #fff;
}

.g-blue { color: #4285f4; }
.g-red { color: #ea4335; }
.g-yellow { color: #fbbc04; }
.g-green { color: #34a853; }

.credits {
  position: absolute;
  right: 0;
  bottom: 0;
  display: flex;
  gap: 2px;
}

.credit {
  padding: 0 12px 0 10px;
  background: rgba(245, 245, 245, .72);
  color: #000;
  font-size: 20px;
  line-height: 28px;
  text-decoration: none;
}

/* address list */

.places {
  display: flex;
  flex-direction: column;
  justify-content: flex-end;
  gap: 16px;
  height: 1136px;
  padding: 0 16px 32px;
  overflow: hidden;
  border-radius: 12px;
  background: #94a3b8;
  color: #1d1f20;
  list-style: none;
}

.place {
  flex: none;
  padding: 16px;
  border-radius: 24px;
  background: #e2e8f0;
}

.place strong {
  display: block;
  font-weight: 600;
}

.place.is-selected {
  border: 4px solid #1d4ed8;
}

/* summary panel */

.summary {
  display: flex;
  flex-direction: column;
  padding: 0 56px 64px;
  background: #dde1e8;
  font-size: 31px;
  text-align: center;
}

.summary-title {
  color: #1d1f20;
  font-size: 40px;
  font-weight: 600;
  line-height: 60px;
}

.summary-heading,
.summary-total {
  font-size: 38px;
  font-weight: 600;
  line-height: 56px;
}

.metric {
  display: flex;
  align-items: center;
  justify-content: space-between;
  margin: 38px 0 32px;
  font-weight: 500;
}

.metric-icon {
  display: grid;
  place-items: center;
  width: 80px;
  height: 80px;
  border-radius: 50%;
  background: #fff;
}

.solar { fill: #1976d2; }
.leaf { fill: #2e7d32; }

.metric-value.brand-font {
  color: #1d1f20;
  font-size: 32px;
}

.metric-energy {
  margin: 32px 0 10px;
  padding-right: 42px;
}

.chart {
  height: 100px;
  padding: 20px 26px 18px;
  background: #fff;
}

.chart-wide {
  margin: 0 -24px 62px;
  padding: 20px 28px 18px;
}

.bars {
  display: grid;
  grid-template-columns: repeat(5, 1fr);
  height: 62px;
  border: solid #ccc;
  border-width: 2px 0 2px 2px;
  border-left-color: #333;
}

.bars i {
  border-right: 2px solid #ccc;
}

.chart-wide .bars {
  border-bottom-color: #333;
}

.summary-heading {
  text-align: left;
}

.hint {
  margin: 40px 0;
}

.slider-label {
  font-weight: 500;
}

.slider {
  width: calc(100% + 40px);
  height: 40px;
  margin: 10px -20px 42px;
  appearance: none;
  background:
    linear-gradient(#1976d2, #1976d2) 20px 50% / calc(100% - 40px) 4px no-repeat,
    linear-gradient(rgba(25, 118, 210, .38), rgba(25, 118, 210, .38)) 20px 50% / calc(100% - 42px) 8px no-repeat;
}

.slider::-webkit-slider-thumb {
  width: 40px;
  height: 40px;
  appearance: none;
  border-radius: 50%;
  background: #1976d2;
  box-shadow: 0 2px 6px rgba(0, 0, 0, .3);
}

.dock-shadow {
  position: fixed;
  left: 35%;
  right: 35%;
  bottom: -160px;
  height: 160px;
  box-shadow: 0 0 80px rgba(0, 0, 0, .22);
}

.corner {
  position: fixed;
  right: 0;
  bottom: 0;
  width: 3px;
  height: 6px;
  border-top-left-radius: 3px;
  background: #000;
}

@media (max-width: 1800px) {
  .page {
    padding: 32px;
  }

  .dashboard,
  .explorer {
    grid-template-columns: 1fr;
  }
}
```
